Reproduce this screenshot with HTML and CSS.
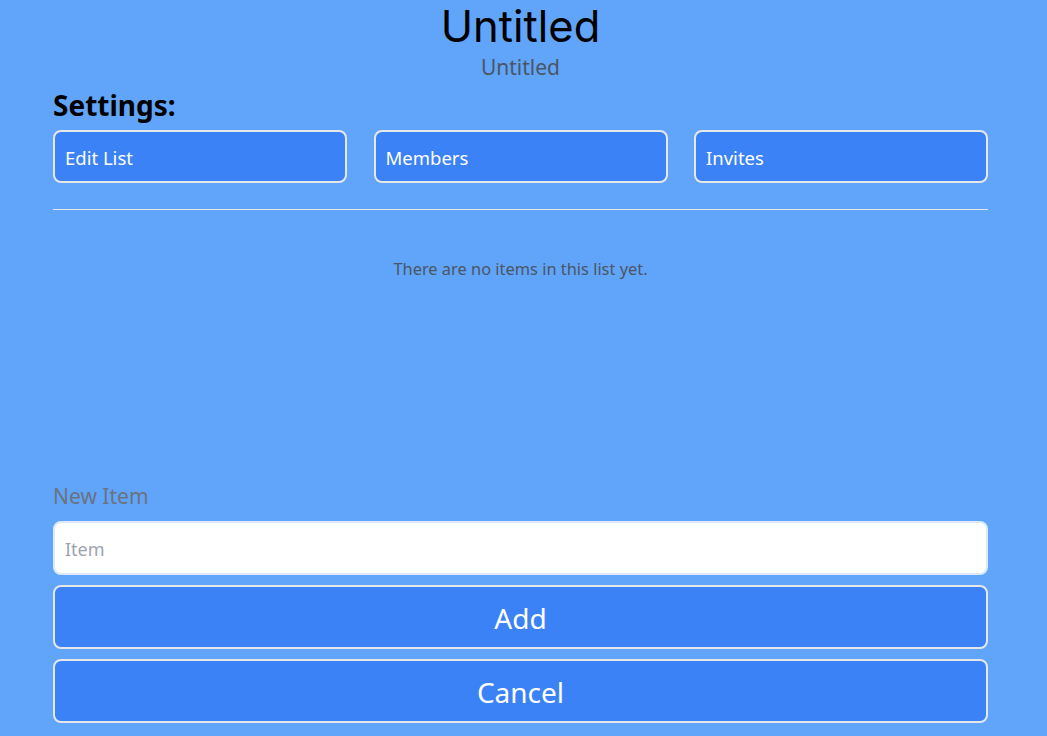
FILE: index.html
```html
<!DOCTYPE html>
<html>
<head>
<meta charset="utf-8">
<link rel="stylesheet" href="styles.css">
</head>
<body>
<main class="page">
  <header class="head">
    <h1 class="title">Untitled</h1>
    <p class="subtitle">Untitled</p>
  </header>
  <h2 class="settings-title">Settings:</h2>
  <nav class="settings">
    <button class="setting-btn">Edit List</button>
    <button class="setting-btn">Members</button>
    <button class="setting-btn">Invites</button>
  </nav>
  <hr class="divider">
  <section class="items">
    <p class="empty">There are no items in this list yet.</p>
  </section>
  <form class="new-item">
    <label class="label" for="item">New Item</label>
    <input class="input" id="item" type="text" placeholder="Item">
    <button class="big-btn" type="button">Add</button>
    <button class="big-btn" type="button">Cancel</button>
  </form>
</main>
</body>
</html>
```
FILE: styles.css
```css
html, body {
  margin: 0;
  padding: 0;
  background: #60a5fa;
  font-family: "Noto Sans", "Open Sans", sans-serif;
}
.page {
  width: 935px;
  margin-left: 53px;
  display: flex;
  flex-direction: column;
}
.head {
  text-align: center;
}
.title {
  margin: 0;
  font-family: Inter, "Noto Sans", sans-serif;
  font-size: 43.5px;
  font-weight: 400;
  line-height: 53px;
  color: #000;
}
.subtitle {
  margin: 0;
  font-size: 21px;
  line-height: 29px;
  color: #4b5563;
}
.settings-title {
  margin: 5px 0 0;
  font-size: 28px;
  font-weight: 700;
  line-height: 36px;
  color: #000;
}
.settings {
  margin-top: 7px;
  display: grid;
  grid-template-columns: repeat(3, 1fr);
  column-gap: 26.5px;
}
.setting-btn {
  height: 53px;
  box-sizing: border-box;
  background: #3b82f6;
  border: 2px solid #e5e7eb;
  border-radius: 8px;
  color: #fff;
  font-family: inherit;
  font-size: 18.5px;
  text-align: left;
  padding: 2px 10px 0;
}
.divider {
  margin: 26px 0 0;
  border: 0;
  border-top: 1px solid #e5e7eb;
  height: 0;
}
.items {
  height: 272px;
}
.empty {
  margin: 47px 0 0;
  text-align: center;
  font-size: 16.4px;
  line-height: 24px;
  color: #4b5563;
}
.new-item {
  display: flex;
  flex-direction: column;
}
.label {
  font-size: 21px;
  line-height: 28px;
  color: #6b7280;
}
.input {
  margin-top: 11px;
  height: 54px;
  box-sizing: border-box;
  border: 2px solid #dbeafe;
  border-radius: 8px;
  background: #fff;
  padding: 2px 10px 0;
  font-family: inherit;
  font-size: 18px;
  color: #111827;
  outline: none;
}
.input::placeholder {
  color: #9ca3af;
}
.big-btn {
  margin-top: 10px;
  height: 64px;
  box-sizing: border-box;
  background: #3b82f6;
  border: 2px solid #e5e7eb;
  border-radius: 8px;
  color: #fff;
  font-family: inherit;
  font-size: 28px;
  padding-top: 2px;
}
```
